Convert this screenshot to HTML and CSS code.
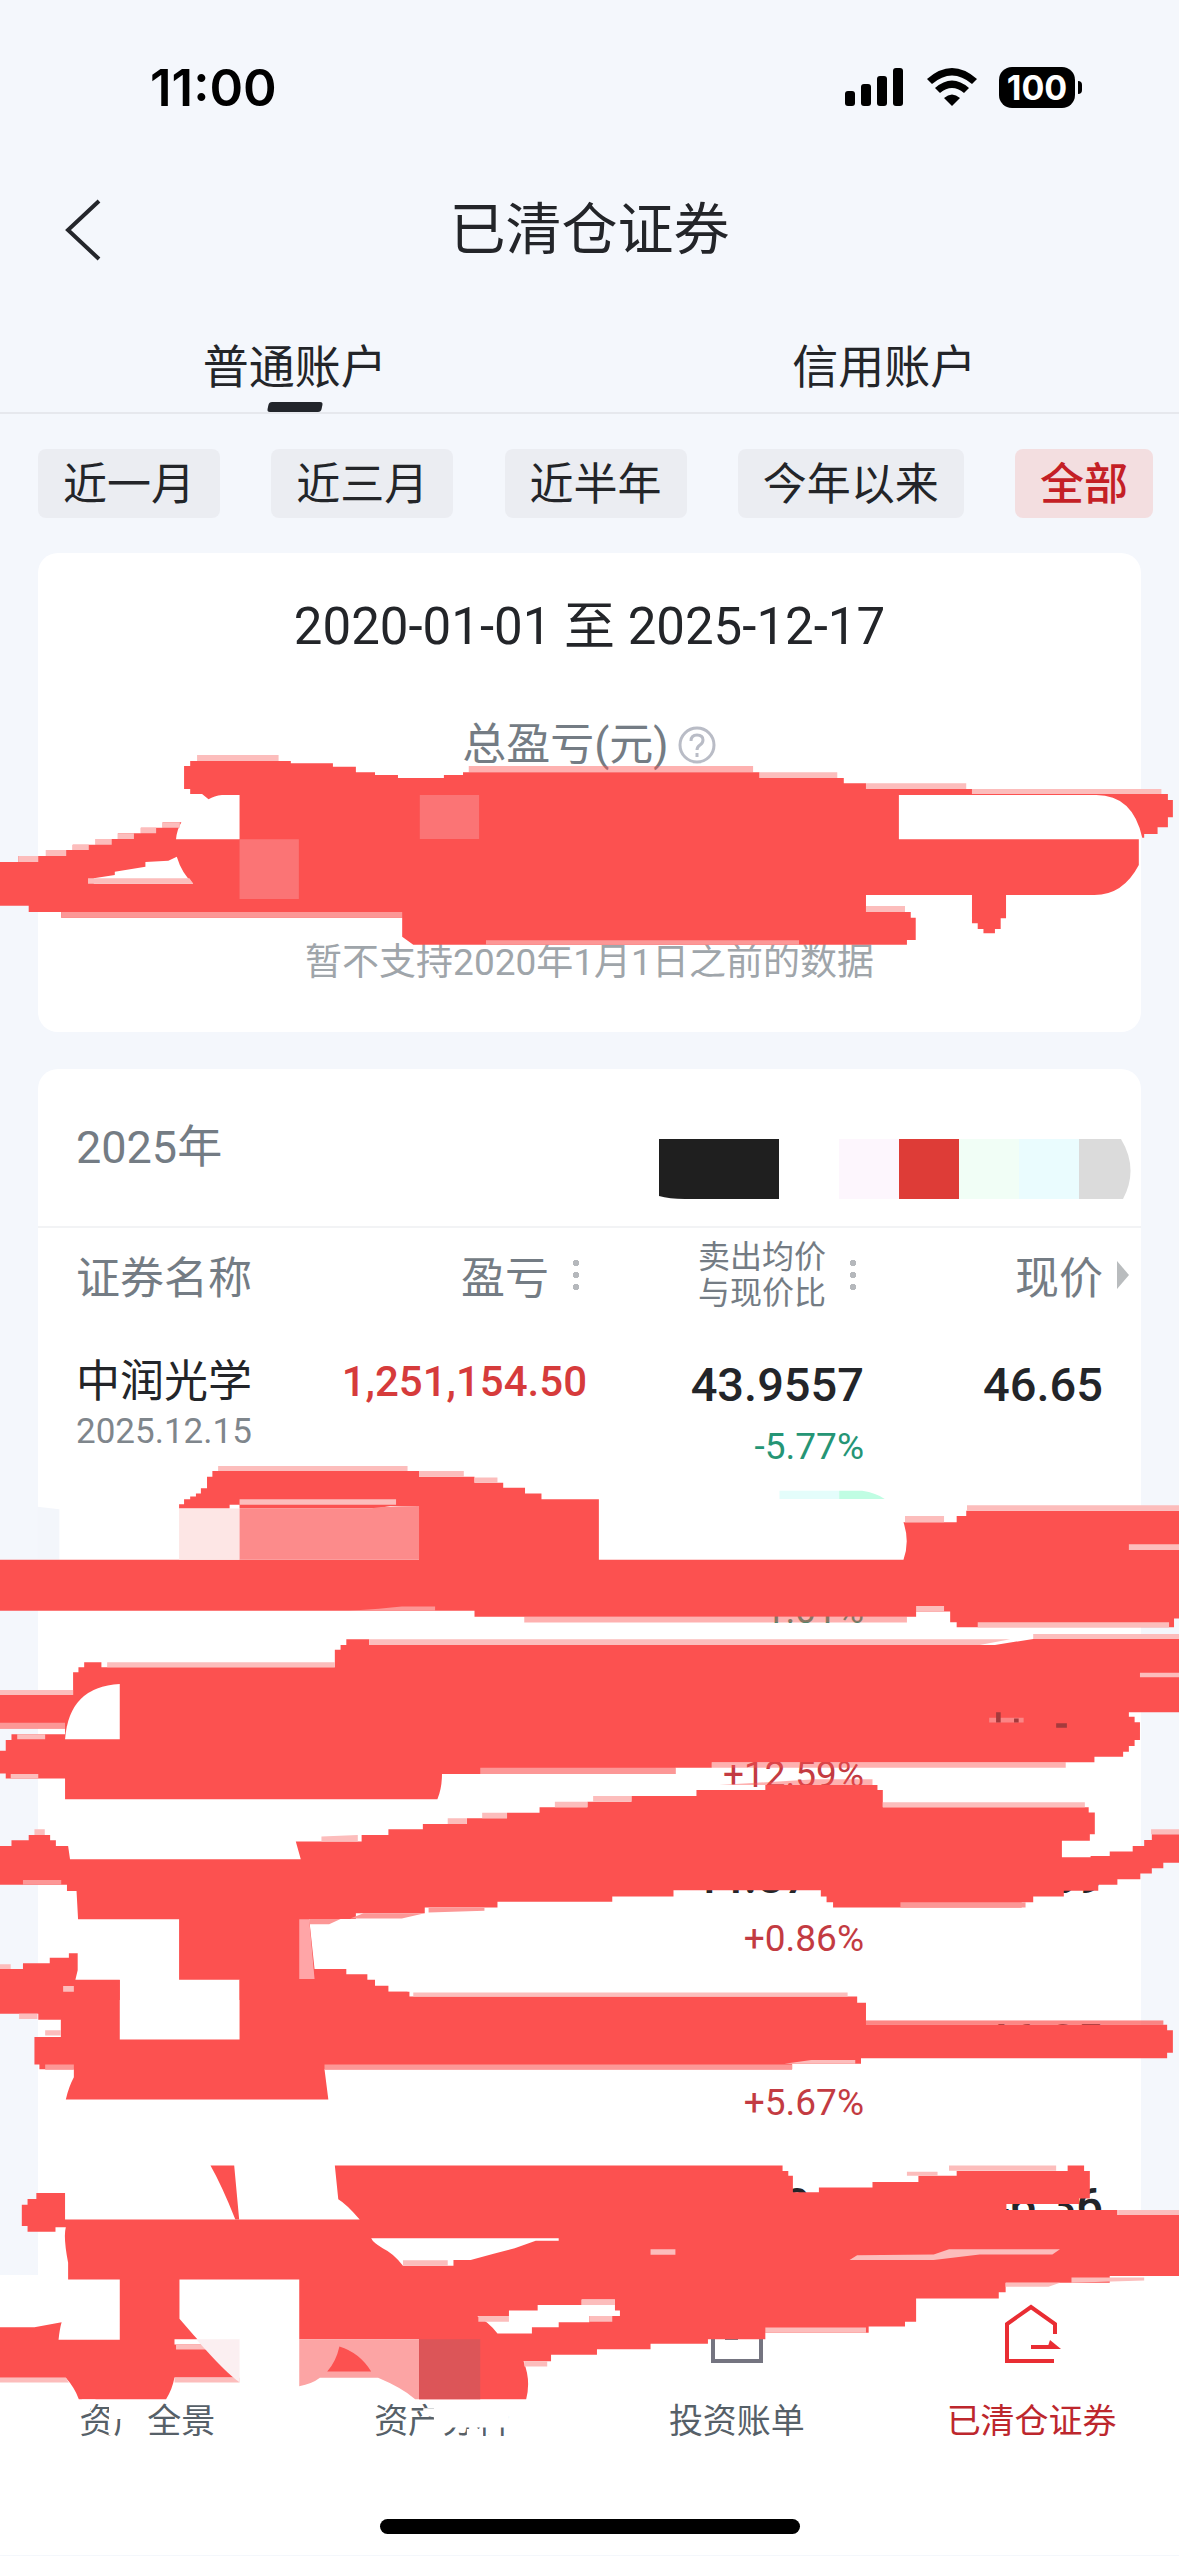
FILE: index.html
```html
<!DOCTYPE html>
<html lang="zh-CN">
<head>
<meta charset="utf-8">
<meta name="viewport" content="width=device-width, initial-scale=1">
<title>已清仓证券</title>
<link rel="stylesheet" href="styles.css">
</head>
<body>
<div class="screen">
  <div class="status">
    <span class="clock">11:00</span>
    <div class="status-icons">
      <svg width="60" height="40" viewBox="0 0 60 40" aria-hidden="true"><rect x="0" y="24" width="10" height="15" rx="3"/><rect x="16" y="17" width="10" height="22" rx="3"/><rect x="32" y="9" width="10" height="30" rx="3"/><rect x="48" y="1" width="10" height="38" rx="3"/></svg>
      <svg width="52" height="40" viewBox="0 0 52 40" aria-hidden="true"><path d="M26 39l-8-8q8-7 16 0zM1 12Q26-10 51 12l-5 5Q26 0 6 17zM9 21Q26 6 43 21l-5 5Q26 16 14 26z"/></svg>
      <span class="battery">100</span>
    </div>
  </div>
  <header class="topbar">
    <button class="back" type="button" aria-label="返回"><svg width="40" height="64" viewBox="0 0 40 64"><path d="M35 3L4 32l31 29" fill="none" stroke="#24262b" stroke-width="4"/></svg></button>
    <h1>已清仓证券</h1>
  </header>
  <nav class="tabs">
    <a class="tab tab-on" href="#normal">普通账户</a>
    <a class="tab" href="#credit">信用账户</a>
  </nav>
  <div class="chips">
    <button class="chip" type="button">近一月</button>
    <button class="chip" type="button">近三月</button>
    <button class="chip" type="button">近半年</button>
    <button class="chip" type="button">今年以来</button>
    <button class="chip chip-on" type="button">全部</button>
  </div>
  <main>
    <section class="card summary">
      <p class="range">2020-01-01 至 2025-12-17</p>
      <p class="total">总盈亏(元)<svg width="40" height="40" viewBox="0 0 40 40" fill="none" stroke="#b9bcc6" stroke-width="3" aria-hidden="true"><circle cx="20" cy="20" r="17"/><path d="M14 16q0-6 6-6t6 5q0 3-3 5t-3 5"/><path d="M20 28v4"/></svg></p>
      <p class="note">暂不支持2020年1月1日之前的数据</p>
    </section>
    <section class="card list">
      <div class="year">
        <h2>2025年</h2>
        <svg class="mosaic" width="472" height="60" viewBox="0 0 472 60" aria-hidden="true"><path d="M0 0h120v60H26Q10 60 0 57z" fill="#1f1f1f"/><path d="M180 0h60v60h-60z" fill="#fdf6fd"/><path d="M240 0h60v60h-60z" fill="#de3c37"/><path d="M300 0h60v60h-60z" fill="#f1fef6"/><path d="M360 0h60v60h-60z" fill="#eafcfe"/><path d="M420 0h42q18 30 2 60h-44z" fill="#dbdbdb"/></svg>
      </div>
      <table>
        <colgroup><col class="c-name"><col class="c-num"><col class="c-num"><col></colgroup>
        <thead><tr>
          <th>证券名称</th>
          <th><span class="head">盈亏<i class="dots"></i></span></th>
          <th><span class="head"><small>卖出均价<br>与现价比</small><i class="dots"></i></span></th>
          <th class="last"><span class="head">现价<i class="more"></i></span></th>
        </tr></thead>
        <tbody>
          <tr><td><span class="name">中润光学</span><span class="date">2025.12.15</span></td><td class="profit">1,251,154.50</td><td class="num">43.9557<span class="pct down">-5.77%</span></td><td class="num">46.65</td></tr>
          <tr><td></td><td></td><td class="num"><span class="pct lower down">-1.01%</span></td><td></td></tr>
          <tr><td></td><td></td><td class="num"><span class="pct lower">+12.59%</span></td><td></td></tr>
          <tr><td></td><td></td><td class="num">44.8717<span class="pct">+0.86%</span></td><td class="num">46.69</td></tr>
          <tr><td></td><td></td><td class="num"><span class="pct lower">+5.67%</span></td><td class="num">46.05</td></tr>
          <tr class="cut"><td></td><td></td><td class="num">40.3046</td><td class="num">46.36</td></tr>
        </tbody>
      </table>
    </section>
  </main>
  <footer>
    <nav class="bottom">
      <a href="#overview"><span class="blank"></span>资产全景</a>
      <a href="#analysis"><span class="blank"></span>资产分析</a>
      <a href="#bill"><svg width="60" height="60" viewBox="0 0 60 60" fill="none" stroke="#747480" stroke-width="4" aria-hidden="true"><path d="M6 4h48v54H6zM18 35h13"/></svg>投资账单</a>
      <a class="on" href="#cleared"><svg width="60" height="60" viewBox="0 0 60 60" fill="none" stroke="#e92d33" stroke-width="4" aria-hidden="true"><path d="M53 31V21L29 4 5 21v37h47M29 44h24"/><path d="M48 37l11 9H45z" fill="#e92d33" stroke="none"/></svg>已清仓证券</a>
    </nav>
    <div class="home"></div>
  </footer>

  <svg class="marker" viewBox="0 0 1179 2556" aria-hidden="true">
    <svg x="0" y="740" width="1179" height="220" viewBox="0 0 3081 660" preserveAspectRatio="none">
      <path class="ink" d="M0 366H48V348H120V330H190V314H250V297H308V280H368V263H425V247H474Q462 270 460 298H626V165H580Q560 167 545 178L528 162H497V147H481V78H497V63H760V70H870V80H930V97H980V105H1040V114H1160V105H1210V97H1985V114H2205V130H2263V147H2540V162H3052V180H3065V232H3052V262H3025V282H2990V293H2985Q2960 165 2865 165H2349V298H2976V375Q2935 465 2860 465H2629V535H2615V567H2600V580H2570V567H2555V550H2540V465H2263V516H2380V533H2393V600H2370V614H1080L1051 590V533H160V516H75V497H0Z"/>
      <path fill="#fff" d="M245 431V415L300 405V395L380 380V366L440 362L462 350Q475 400 505 431Z"/>
      <path fill="#fb7475" d="M626 298H781V477H626ZM1097 165H1252V297H1097Z"/>
      <path class="edge" d="M515 45H728V63H515ZM1985 97H2188V114H1985ZM2263 130H2525V147H2263ZM2540 147H3035V162H2540ZM2263 498H2365V516H2263ZM230 415H495L505 431H230ZM48 348H100V366H48ZM120 330H173V348H120ZM190 314H232V330H190ZM250 297H292V314H250ZM308 280H350V297H308ZM368 263H408V280H368ZM425 247H470V263H425Z"/>
      <path class="veil" d="M1225 78H1968V97H1225Z"/>
      <path class="soft" d="M160 516H1051V533H160ZM1270 601H2088V614H1270Z"/>
    </svg>
    <svg x="0" y="1440" width="1179" height="560" viewBox="0 0 3081 1568" preserveAspectRatio="none">
      <path fill="#f3f6fb" d="M98 187L155 194V335H98Z"/>
      <path class="ink" d="M468 192V180H481V166H497V158H512V150H525V135H541V103H555V87H1095V103H1240V120H1315V134H1372V150H1415V166H1565V335H2361Q2378 285 2361 230H2500V213H2525V198H3081V500H3068V524H2500V510H2483V480H2394V495H1240V478H0V335H1095V185H1020Q990 192 970 192H626V181H600V192Z"/>
      <path fill="#fde6e5" d="M468 192H626V335H468Z"/>
      <path fill="#fc8b8b" d="M626 192H970Q990 185 1095 185V335H626Z"/>
      <path class="edge" d="M570 73H1065V87H570ZM626 166H1035V181H626ZM1095 87H1212V103H1095ZM1240 105H1300V120H1240ZM2527 183H3081V198H2527ZM2365 213H2467V230H2365ZM2394 465H2467V480H2394ZM2555 510H3055V524H2555ZM2950 292H3081V308H2950Z"/>
      <path class="veil" d="M1370 495H2370V511H1370Z"/>
      <path class="soft" d="M910 478Q1000 472 1050 466H1137V478Z"/>
      <path fill="#e4fdfb" d="M2037 142H2193V165H2037Z"/>
      <path fill="#c0fde3" d="M2193 142H2253Q2290 148 2312 165H2193Z"/>
      <path class="ink" d="M0 714H191V650H205V636H220V622H265V636H875V587H890V574H905V558H965V574H2600L2700 557H3081V762H2950V775H2965V790H2979V840H2965V857H2950V873H2935V887H2860V902H1860V918H1765V935H1155Q1155 975 1143 1006H170V948H15V934H0V870H15V840H30V824H170V808H0Z"/>
      <path fill="#fff" d="M313 838H170Q180 690 313 683Z"/>
      <path class="edge" d="M0 700H191V714H0ZM280 622H875V636H280ZM965 558H2640L2560 574H965ZM2700 543H3081V557H2700ZM2979 652H3081V664H2979ZM28 935H100V948H28ZM45 824H118V838H45Z"/>
      <path class="veil" d="M1860 902H2785V918H1860Z"/>
      <path class="soft" d="M0 792H170V808H0ZM1255 918H1765V935H1255Z"/>
      <path fill="#fb8585" d="M2585 778H2675V791H2585Z"/>
      <path fill="#a43a3c" d="M2603 762H2615V791H2603ZM2650 780H2662V791H2650ZM2760 793H2788V806H2760Z"/>
      <path class="ink" d="M0 1137H30V1121H75V1106H131V1121H146V1137H178L183 1174H786L773 1124H945V1106H1015V1090H1105V1075H1220V1059H1325V1044H1410V1028H1535V1013H1650V997H1820V980H2000V966H2293V980H2307V1028H2845V1043H2861V1104H2848V1122H2775V1168H2850V1165H2900V1152H2960V1137H2990V1120H3010V1104H3081V1184H3040V1199H3010V1214H2980V1230H2920V1245H2870V1262H2780V1278H2700V1294H2670V1309H2177V1294H2160V1278H2145V1261H1760V1278H1600V1293H1300V1309H1110V1325H930V1341H808L822 1481H905V1496H960V1511H980V1528H1015V1545H1065V1568H626V1511H468V1342H204L200 1263H175V1245H0Z"/>
      <path class="ink" d="M0 1481H60V1465H130V1450H180V1437H203V1485L197 1511H313V1568H0Z"/>
      <path fill="#ffa5a7" d="M782 1342H808L822 1509H782Z"/>
      <path class="edge" d="M2307 1014H2835V1028H2307ZM3008 1090H3081V1104H3008ZM840 1124V1110L935 1106V1124ZM1170 1059H1220V1075H1170ZM1260 1044H1325V1059H1260ZM1450 1013H1535V1028H1450ZM1550 997H1650V1013H1550ZM90 1090H117V1106H90ZM0 1468H28V1481H0Z"/>
      <path class="veil" d="M1880 966L2130 950H2280V966Z"/>
      <path class="soft" d="M2353 1294H2680V1309H2353ZM915 1340L950 1325H1110L1050 1340ZM1120 1323V1310H1266V1318ZM60 1232H160V1245H60ZM808 1341H890L860 1356H810Z"/>
    </svg>
    <svg x="0" y="1980" width="1179" height="576" viewBox="0 0 3081 1568" preserveAspectRatio="none">
      <path class="ink" d="M0 0H313V162H626V0H965V18H1010V32H1070V45H2240V62H2263V122H3050V137H3065V198H3050V213H2250V228H2070V243H848L858 325H172Q180 290 193 265V243H103V230H90V155H159V108H100V92H0Z"/>
      <path class="edge" d="M1080 34H2215V45H1080ZM165 16H193V32H165ZM50 92H98V106H50ZM118 137H159V151H118ZM2050 228L2120 218H2235V228Z"/>
      <path class="soft" d="M848 230H2070V244H848ZM118 230H193V244H118Z"/>
      <path class="veil" d="M2263 110H3040V122H2263Z"/>
      <path class="veil" d="M2263 110H3040V122H2263Z"/>
      <path class="ink" d="M550 505H612L625 652H615Q580 560 550 505Z"/>
      <path class="ink" d="M57 612H72V596H95V580H170V652H940Q905 610 884 597L875 505H2045V520H2060V533H2072V578H2140V565H2280V550H2400V533H2500V520H2790V505H2833V520H2848V595H2820V610H2630V626H2920V640H3081V806H2900V824H2628V850H2610V867H2394V930H2365V943H2270V960H2000V978H1850V990H1700V1005H1560V1020H1440V1038H1368Q1388 1090 1375 1141H1095V978H782V815H469V922Q540 1010 614 1082H456Q450 1115 434 1141H206Q195 1110 172 1083H0V945H90L161 932Q156 950 153 979H313V815H178V770Q165 700 172 673H145V685H72V670H57Z"/>
      <path fill="#fff" d="M970 703H1460V710H1400L1345 730 1290 745 1230 762H1185V778H1053Q1030 745 1000 730 975 715 970 703ZM1247 915H1330V900H1405V885H1520V870H1607V900H1620V915H1540V932H1460V945H1390V962H1300Q1275 930 1247 915ZM456 978H530L540 992H456Z"/>
      <path class="edge" d="M1053 763H1170V778H1053ZM1250 915H1330V930H1250ZM1520 870H1607V885H1520ZM1540 915H1600V930H1540ZM460 992H540L552 1006H460ZM2220 762L2240 749 2440 747 2480 733H2770L2750 747H2560L2440 762ZM1700 733H1765V748H1700ZM2922 626H3081V640H2922ZM2480 519V505H2760V519ZM2370 533V522H2450V533ZM0 1083H172L180 1096H0ZM456 1083H626V1096H456ZM2000 946H2263V960H2000ZM2628 824H2770L2740 835H2628ZM2800 824V810H2990V818ZM1370 1038H1430V1052H1370Z"/>
      <path fill="#fbeff1" d="M513 978H626V1095Q590 1070 513 978Z"/>
      <path fill="#fca4a4" d="M782 978H1095V1141H1085Q1050 1110 988 1083H836Q815 1100 782 1106Z"/>
      <path class="ink" d="M887 998Q940 1015 970 1066H855Q878 1040 887 998Z"/>
      <path fill="#dc5558" d="M1095 978H1255V1141H1095Z"/>
      <path fill="#fff" d="M214 1142H250L230 1180L204 1172ZM285 1148H384V1244H315V1195H302L296 1240H284ZM1134 1148H1330V1222H1220V1244H1262V1222H1330V1218H1160L1154 1244H1134V1190L1106 1185V1166H1134ZM1278 1218H1306V1244H1278Z"/>
    </svg>
  </svg>
</div>
</body>
</html>
```
FILE: styles.css
```css
* { box-sizing: border-box; }
body {
  margin: 0;
  background: #f4f7fc;
  color: #232529;
  font-family: Roboto, "Noto Sans CJK SC", sans-serif;
}
h1, h2, p { margin: 0; font-weight: 400; }
a { color: inherit; text-decoration: none; }
button { border: 0; padding: 0; background: none; color: inherit; font: inherit; }
.screen { position: relative; overflow: hidden; }

.status {
  display: flex;
  align-items: center;
  justify-content: space-between;
  height: 174px;
  padding: 0 104px 0 150px;
  color: #000;
  font-family: Inter, sans-serif;
}
.clock { font-size: 51px; font-weight: 600; }
.status-icons { display: flex; align-items: center; gap: 21px; }
.battery {
  position: relative;
  width: 76px;
  height: 41px;
  border-radius: 13px;
  background: #000;
  color: #fff;
  font-size: 34px;
  font-weight: 700;
  line-height: 41px;
  text-align: center;
}
.battery::after {
  content: "";
  position: absolute;
  top: 14px;
  right: -7px;
  width: 4px;
  height: 13px;
  border-radius: 0 4px 4px 0;
  background: #000;
}

.topbar {
  display: grid;
  grid-template-columns: 104px 1fr 104px;
  align-items: center;
  height: 112px;
  margin-bottom: 36px;
}
.back { display: flex; justify-content: flex-end; }
.topbar h1 { font-size: 56px; line-height: 80px; text-align: center; }

.tabs { display: flex; border-bottom: 2px solid #e6e8ed; }
.tab {
  position: relative;
  flex: 1;
  font-size: 46px;
  line-height: 90px;
  text-align: center;
}
.tab-on::after {
  content: "";
  position: absolute;
  left: 50%;
  bottom: 0;
  width: 54px;
  height: 10px;
  margin-left: -27px;
  border-radius: 3px;
  background: #22252b;
  transform: skewX(-12deg);
}

.chips { display: flex; justify-content: space-between; padding: 35px 26px 35px 38px; }
.chip {
  height: 69px;
  padding: 0 25px;
  border-radius: 8px;
  background: #ebedf2;
  font-size: 44px;
  line-height: 72px;
}
.chip-on { background: #f3dee0; color: #c41f26; font-weight: 500; }

main { padding: 0 38px; }
.card { border-radius: 20px; background: #fff; }
.summary { margin-bottom: 37px; padding: 44px 0 39px; text-align: center; }
.summary p { line-height: 60px; }
.range { font-size: 51px; }
.total {
  display: flex;
  justify-content: center;
  align-items: center;
  gap: 8px;
  margin: 58px 0 158px;
  color: #747c84;
  font-size: 44px;
}
.note { color: #9fa5aa; font-size: 37px; }

.list { border-radius: 20px 20px 0 0; }
.year {
  display: flex;
  align-items: center;
  justify-content: space-between;
  height: 159px;
  padding: 0 10px 0 38px;
  border-bottom: 2px solid #f2f3f5;
}
.year h2 { padding-bottom: 8px; color: #747c84; font-size: 45px; }
.mosaic { align-self: flex-end; margin-bottom: 27px; }

table { width: 100%; border-collapse: collapse; table-layout: fixed; }
.c-name { width: 272px; }
.c-num { width: 277px; }
th, td { padding: 0; text-align: right; vertical-align: top; }
th {
  height: 98px;
  padding-bottom: 4px;
  padding-right: 8px;
  color: #747c84;
  font-size: 44px;
  font-weight: 400;
  vertical-align: middle;
}
th:first-child, td:first-child { padding-left: 38px; text-align: left; white-space: nowrap; }
th.last { padding-right: 12px; }
.head { display: flex; align-items: center; justify-content: flex-end; gap: 24px; }
.last .head { gap: 14px; }
.head small { font-size: 32px; line-height: 36px; }
.dots {
  width: 6px;
  height: 36px;
  background: radial-gradient(circle, #b5b8bc 3px, transparent 3px) 0 0 / 6px 12px;
}
.more {
  width: 0;
  border-top: 14px solid transparent;
  border-bottom: 14px solid transparent;
  border-left: 12px solid #b9bcbe;
}
tbody tr { height: 164px; }
tbody .cut { height: 129px; }
td { padding-top: 27px; line-height: 64px; }
.name { display: block; font-size: 44px; line-height: 58px; }
.date { display: block; color: #7f868c; font-size: 35px; line-height: 42px; }
.profit { color: #d63b3b; font-size: 42px; font-weight: 500; line-height: 58px; }
.num { font-size: 47px; font-weight: 500; }
td:last-child { padding-right: 38px; }
.pct { display: block; color: #c33b42; font-size: 37px; font-weight: 400; line-height: 60px; }
.lower { padding-top: 64px; }
.down { color: #259575; }

footer { padding: 28px 0 21px; background: #fff; }
.bottom { display: grid; grid-template-columns: repeat(4, 1fr); margin-bottom: 76px; }
.bottom a {
  display: flex;
  flex-direction: column;
  align-items: center;
  gap: 36px;
  color: #566068;
  font-size: 34px;
  line-height: 44px;
}
.blank { height: 60px; }
.bottom .on { color: #bd272d; }
.home { width: 420px; height: 15px; margin: 0 auto; border-radius: 8px; background: #000; }

.marker { position: absolute; top: 0; left: 0; width: 100%; pointer-events: none; }
.ink { fill: #fc5150; }
.edge { fill: #fcbdbc; }
.soft { fill: #fc9796; }
.veil { fill: #fc5150; fill-opacity: 0.45; }
```
